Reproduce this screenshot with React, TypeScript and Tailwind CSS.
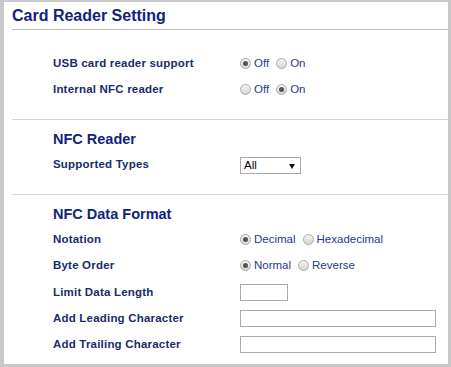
import React from 'react';

const font = { fontFamily: '"Liberation Sans", Arial, sans-serif' };

const Radio = ({ checked }: { checked?: boolean }) => (
  <span className="relative inline-flex w-[11px] h-[11px] rounded-full border border-[#a8a8a8] bg-gradient-to-b from-[#f4f4f4] to-[#d6d6d6] items-center justify-center flex-shrink-0">
    {checked && <span className="w-[5px] h-[5px] rounded-full bg-[#555]" />}
  </span>
);

const RadioGroup = ({ options, value }: { options: string[]; value: string }) => (
  <div className="flex items-center gap-[7px]">
    {options.map((o) => (
      <label key={o} className="flex items-center gap-[3px] text-[11.5px] text-[#27388f]">
        <Radio checked={o === value} />
        <span className="pt-[2px]">{o}</span>
      </label>
    ))}
  </div>
);

const Row = ({ label, children, className = '' }: { label: string; children: React.ReactNode; className?: string }) => (
  <div className={`flex items-center h-[26px] ${className}`}>
    <div className="w-[187px] text-[11.5px] font-bold leading-[26px] tracking-[0.2px] text-[#1a2a6e]">{label}</div>
    {children}
  </div>
);

const TextBox = ({ w }: { w: string }) => (
  <div className={`${w} h-[17px] mt-[1px] border border-[#ababab] bg-white`} />
);

export default function App() {
  return (
    <div style={font} className="w-[451px] h-[367px] bg-[#c8c8c8] pl-[4px] pt-[2px] pr-[3px] pb-[3px]">
      <div className="bg-white h-full flex flex-col">
        {/* Title */}
        <div className="ml-[8px] pt-[3px] pb-[3px] border-b border-[#bdbdbd]">
          <h1 className="text-[16px] font-bold leading-[21px] text-[#13227a]">Card Reader Setting</h1>
        </div>

        {/* Reader toggles */}
        <div className="pl-[49px] pt-[20px] pb-[17px]">
          <Row label="USB card reader support">
            <RadioGroup options={['Off', 'On']} value="Off" />
          </Row>
          <Row label="Internal NFC reader">
            <RadioGroup options={['Off', 'On']} value="On" />
          </Row>
        </div>

        <div className="ml-[8px] border-t border-[#d4d4d4]" />

        {/* NFC Reader */}
        <div className="pl-[49px] pt-[9px] pb-[17px]">
          <h2 className="text-[14.5px] font-bold leading-[20px] text-[#13227a] mb-[2px]">NFC Reader</h2>
          <Row label="Supported Types">
            <div className="w-[61px] h-[17px] mt-[2px] border border-[#ababab] flex items-end justify-between pl-[3px] pr-[5px] pb-[1px] text-[11.5px] leading-[13px] text-black">
              <span>All</span>
              <svg width="6" height="5" viewBox="0 0 6 5" className="mb-[3px]">
                <path d="M0 0h6L3 5z" fill="#111" />
              </svg>
            </div>
          </Row>
        </div>

        <div className="ml-[8px] border-t border-[#d4d4d4]" />

        {/* NFC Data Format */}
        <div className="pl-[49px] pt-[9px]">
          <h2 className="text-[14.5px] font-bold leading-[20px] text-[#13227a] mb-[2px]">NFC Data Format</h2>
          <Row label="Notation">
            <RadioGroup options={['Decimal', 'Hexadecimal']} value="Decimal" />
          </Row>
          <Row label="Byte Order">
            <RadioGroup options={['Normal', 'Reverse']} value="Normal" />
          </Row>
          <Row label="Limit Data Length" className="mt-[1px]">
            <TextBox w="w-[48px]" />
          </Row>
          <Row label="Add Leading Character">
            <TextBox w="w-[196px]" />
          </Row>
          <Row label="Add Trailing Character">
            <TextBox w="w-[196px]" />
          </Row>
        </div>
      </div>
    </div>
  );
}
